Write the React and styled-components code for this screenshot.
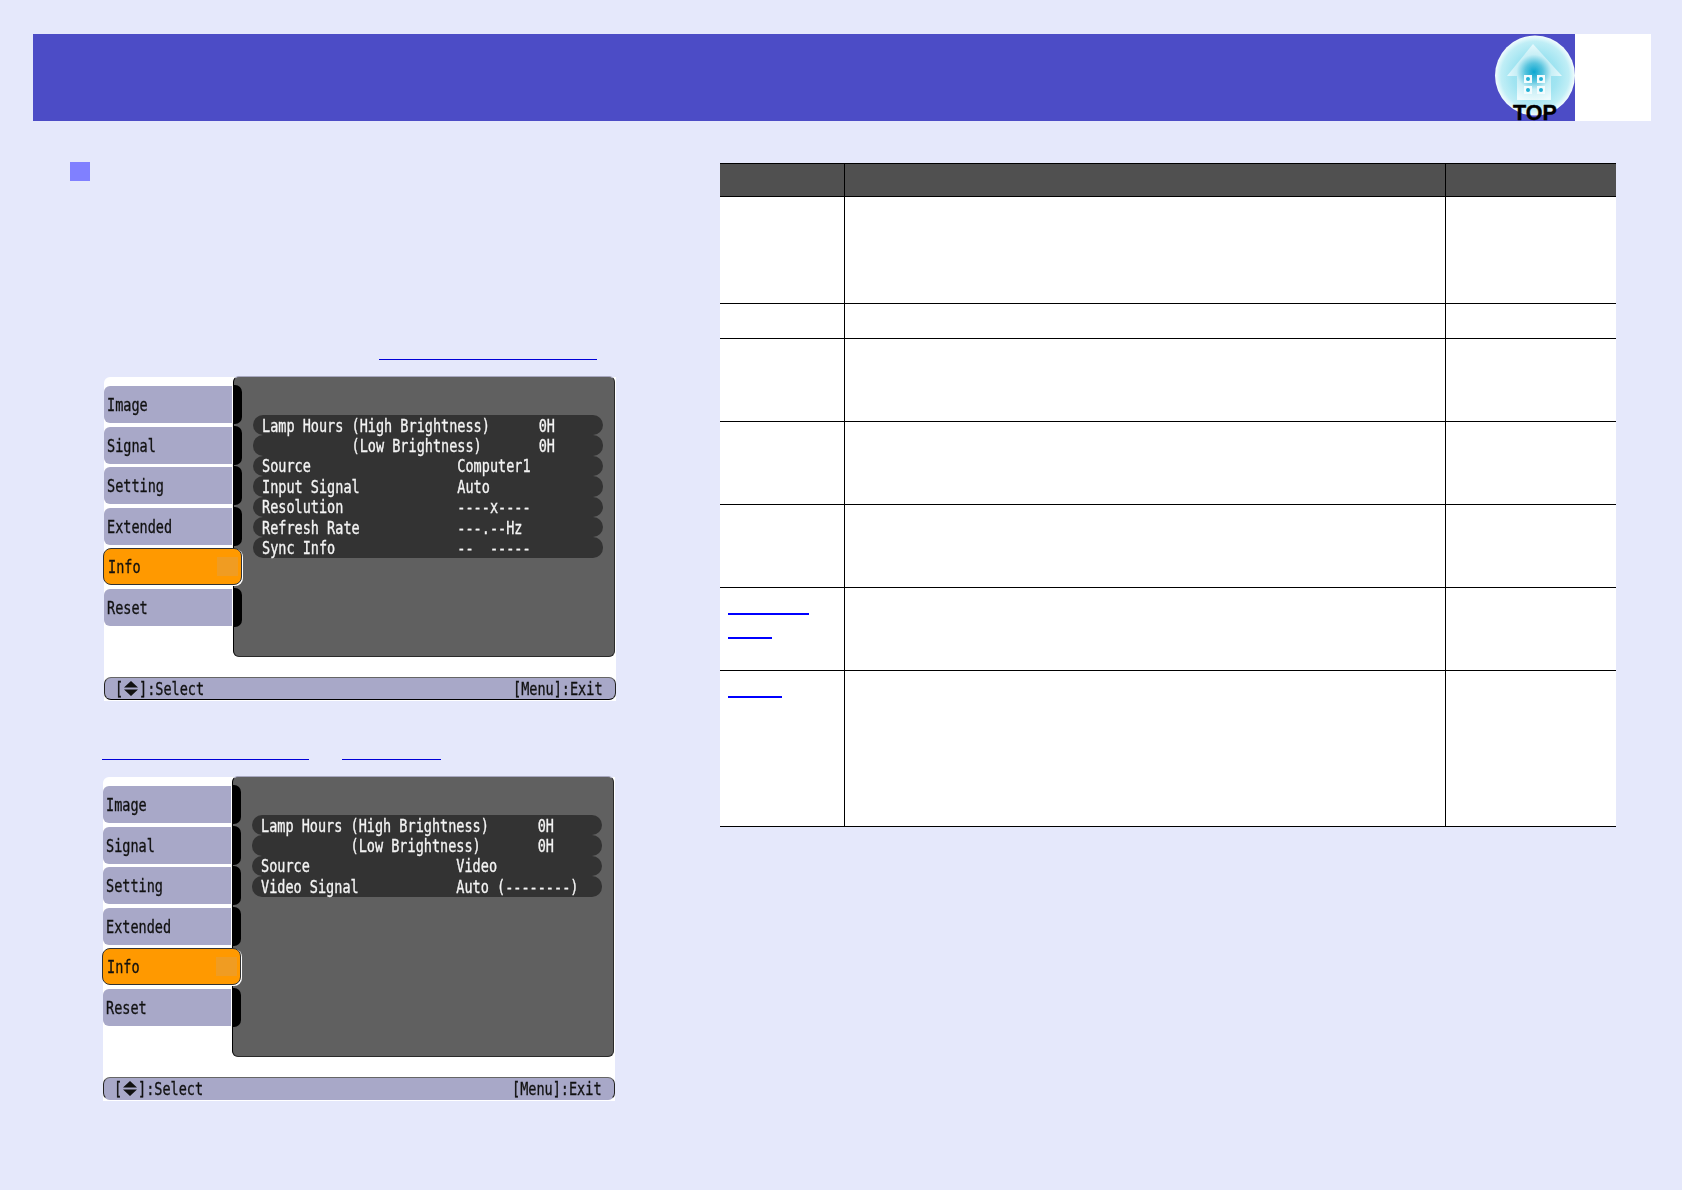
import React from "react";
import styled, { createGlobalStyle } from "styled-components";

const Global = createGlobalStyle`
  html, body { margin: 0; padding: 0; background: #e5e8fb; }
  #root { width: 1682px; height: 1190px; overflow: hidden; font-family: "Liberation Sans", sans-serif; }
`;

const Page = styled.div`
  display: flex;
  flex-direction: column;
  padding-top: 34px;
`;

const Header = styled.header`
  display: flex;
  width: 1618px;
  height: 87px;
  margin-left: 33px;
`;

const HeaderBar = styled.div`
  flex: 1;
  display: flex;
  justify-content: flex-end;
  background: #4c4cc6;
`;

const HeaderPageBox = styled.div`
  width: 76px;
  background: #fff;
`;

const Body = styled.main`
  display: grid;
  grid-template-columns: 650px 896px;
  padding: 41px 0 0 70px;
`;

const LeftColumn = styled.section`
  display: flex;
  flex-direction: column;
`;

const Bullet = styled.div`
  width: 20px;
  height: 19px;
  background: #8080ff;
`;

const LinkRow = styled.div`
  display: flex;
  align-items: flex-end;
  height: ${(p) => p.$height}px;
  padding-left: ${(p) => p.$indent}px;
  gap: 33px;
`;

const RefLink = styled.a`
  display: block;
  width: ${(p) => p.$width}px;
  border-bottom: 1px solid #0000d8;
`;

/* ---------- projector menu ---------- */

const Osd = styled.div`
  display: flex;
  flex-direction: column;
  width: 512px;
  height: 324px;
  margin: ${(p) => p.$top}px 0 0 ${(p) => p.$left}px;
  background: #fff;
  border-radius: 6px 0 0 0;
`;

const OsdMain = styled.div`
  display: flex;
  height: 280px;
`;

const TabList = styled.div`
  display: flex;
  flex-direction: column;
  gap: 3.6px;
  width: 129px;
  padding-top: 9px;
  position: relative;
  z-index: 1;
`;

const Tab = styled.div`
  position: relative;
  display: flex;
  align-items: center;
  box-sizing: border-box;
  height: 37px;
  padding-top: 1px;
  color: #111;
  ${(p) =>
    p.$active
      ? `
    width: 139px;
    margin-left: -1px;
    padding-left: 4px;
    background: #ff9900;
    border: 1px solid #333;
    border-radius: 8px;
    box-shadow: 1px 1px 0 #fff;
  `
      : `
    width: 128px;
    padding-left: 3px;
    background: #a8a8c8;
    border-radius: 6px 0 0 6px;
    &::after {
      content: "";
      position: absolute;
      left: 129px;
      top: -1px;
      bottom: -1px;
      width: 9px;
      background: #000;
      border-radius: 0 7px 7px 0;
    }
  `}
`;

const TabMarker = styled.span`
  position: absolute;
  right: 3px;
  top: 8px;
  width: 21px;
  height: 19px;
  background: #f09c22;
`;

const Panel = styled.div`
  box-sizing: border-box;
  width: 382px;
  height: 281px;
  margin-top: -1px;
  padding: 38px 11px 0 19px;
  background: #606060;
  border: 1px solid #2a2a2a;
  border-top-color: #a8a8c0;
  border-left-color: #000;
  border-radius: 6px;
`;

const InfoRow = styled.div`
  display: flex;
  align-items: center;
  height: 20.4px;
  padding: 1px 0 0 9px;
  box-sizing: border-box;
  background: #333;
  border-radius: 10px;
  color: #f4f4f4;
`;

const OsdText = styled.span`
  display: inline-block;
  width: ${(p) => p.$chars * 8.14}px;
  font-family: "DejaVu Sans Mono", monospace;
  font-size: 18px;
  line-height: 18px;
  white-space: pre;
  -webkit-text-stroke: 0.35px currentColor;
  transform: scaleX(0.751);
  transform-origin: left center;
`;

const StatusBar = styled.div`
  display: flex;
  align-items: center;
  justify-content: space-between;
  box-sizing: border-box;
  height: 23px;
  margin-top: 20px;
  padding: 0 12px 0 10px;
  background: #a8a8c8;
  color: #111;
  border-radius: 7px;
  border: 1px solid #222;
  border-top-color: #666;
  border-bottom-color: ${(p) => (p.$edge ? "#000" : "#a8a8c8")};
`;

const StatusGroup = styled.div`
  display: flex;
  align-items: center;
`;

const ArrowsIcon = styled.svg`
  width: 16px;
  height: 17px;
  display: block;
`;

/* ---------- table ---------- */

const Table = styled.table`
  width: 896px;
  height: 664px;
  margin-top: 1px;
  table-layout: fixed;
  border-collapse: separate;
  border-spacing: 0;
  align-self: start;
  background: #fff;
`;

const HeadCell = styled.th`
  box-sizing: border-box;
  height: 34px;
  padding: 0;
  background: #505050;
  border-top: 1px solid #000;
  border-bottom: 1px solid #000;
  border-right: ${(p) => (p.$last ? "none" : "1px solid #000")};
  width: ${(p) => p.$width}px;
`;

const Row = styled.tr`
  height: ${(p) => p.$height}px;
`;

const Cell = styled.td`
  padding: 0 0 0 8px;
  vertical-align: top;
  box-sizing: border-box;
  border-bottom: 1px solid #000;
  border-right: ${(p) => (p.$last ? "none" : "1px solid #000")};
`;

const CellLink = styled.a`
  display: block;
  box-sizing: border-box;
  width: ${(p) => p.$width}px;
  height: ${(p) => p.$height}px;
  border-bottom: 2px solid #0000ff;
`;

function Label({ text }) {
  return <OsdText $chars={text.length}>{text}</OsdText>;
}

function TopLogo() {
  return (
    <svg width="80" height="87" viewBox="0 0 80 87" style={{ display: "block", overflow: "visible" }}>
      <defs>
        <radialGradient id="disc" cx="50%" cy="50%" r="50%">
          <stop offset="0%" stopColor="#8fdcec" />
          <stop offset="55%" stopColor="#a0e4f1" />
          <stop offset="85%" stopColor="#c0eef6" />
          <stop offset="100%" stopColor="#f4fdfe" />
        </radialGradient>
        <radialGradient id="house" gradientUnits="userSpaceOnUse" cx="39" cy="38" r="30">
          <stop offset="0%" stopColor="#0aa6d0" />
          <stop offset="30%" stopColor="#58c4de" />
          <stop offset="58%" stopColor="#c8eff6" />
          <stop offset="100%" stopColor="#eefbfd" />
        </radialGradient>
        <filter id="soft" x="-10%" y="-10%" width="120%" height="120%">
          <feGaussianBlur stdDeviation="0.6" />
        </filter>
      </defs>
      <circle cx="40" cy="41.5" r="40" fill="url(#disc)" />
      <path d="M38 10 L67 42 L56 42 L56 66 L22 66 L22 42 L12 42 Z" fill="url(#house)" filter="url(#soft)" />
      <g filter="url(#soft)">
        <rect x="29" y="41" width="8" height="8" fill="#f2fbfd" />
        <rect x="42" y="41" width="8" height="8" fill="#f2fbfd" />
        <rect x="29" y="52" width="8" height="8" fill="#f2fbfd" />
        <rect x="42" y="52" width="8" height="8" fill="#f2fbfd" />
        <circle cx="33" cy="45" r="2" fill="#22b0d4" />
        <circle cx="46" cy="45" r="2" fill="#22b0d4" />
        <circle cx="33" cy="56" r="2" fill="#22b0d4" />
        <circle cx="46" cy="56" r="2" fill="#22b0d4" />
      </g>
      <text
        x="18"
        y="86"
        fontFamily="Liberation Sans, sans-serif"
        fontWeight="700"
        fontSize="21.5"
        fill="#000"
        stroke="#000"
        strokeWidth="0.4"
      >
        TOP
      </text>
    </svg>
  );
}

const TABS = ["Image", "Signal", "Setting", "Extended", "Info", "Reset"];

const COMPUTER_ROWS = [
  "Lamp Hours (High Brightness)      0H",
  "           (Low Brightness)       0H",
  "Source                  Computer1",
  "Input Signal            Auto",
  "Resolution              ----x----",
  "Refresh Rate            ---.--Hz",
  "Sync Info               --  -----",
];

const VIDEO_ROWS = [
  "Lamp Hours (High Brightness)      0H",
  "           (Low Brightness)       0H",
  "Source                  Video",
  "Video Signal            Auto (--------)",
];

function OsdMenu({ rows, top, left, edge }) {
  return (
    <Osd $top={top} $left={left}>
      <OsdMain>
        <TabList>
          {TABS.map((name) => (
            <Tab key={name} $active={name === "Info"}>
              <Label text={name} />
              {name === "Info" && <TabMarker />}
            </Tab>
          ))}
        </TabList>
        <Panel>
          {rows.map((text) => (
            <InfoRow key={text}>
              <Label text={text} />
            </InfoRow>
          ))}
        </Panel>
      </OsdMain>
      <StatusBar $edge={edge}>
        <StatusGroup>
          <Label text="[" />
          <ArrowsIcon viewBox="0 0 16 17">
            <path d="M8 1 L15 7.5 H1 Z M1 9.5 H15 L8 16 Z" fill="#111" />
          </ArrowsIcon>
          <Label text="]:Select" />
        </StatusGroup>
        <Label text="[Menu]:Exit" />
      </StatusBar>
    </Osd>
  );
}

const ROW_HEIGHTS = [107, 35, 83, 83, 83, 83, 156];

export default function App() {
  return (
    <Page>
      <Global />
      <Header>
        <HeaderBar>
          <TopLogo />
        </HeaderBar>
        <HeaderPageBox />
      </Header>
      <Body>
        <LeftColumn>
          <Bullet />
          <LinkRow $height={179} $indent={309}>
            <RefLink $width={218} href="#" />
          </LinkRow>
          <OsdMenu rows={COMPUTER_ROWS} top={17} left={34} edge />
          <LinkRow $height={59} $indent={32}>
            <RefLink $width={207} href="#" />
            <RefLink $width={99} href="#" />
          </LinkRow>
          <OsdMenu rows={VIDEO_ROWS} top={17} left={33} />
        </LeftColumn>
        <Table>
          <thead>
            <tr>
              <HeadCell $width={125} />
              <HeadCell $width={601} />
              <HeadCell $width={170} $last />
            </tr>
          </thead>
          <tbody>
            {ROW_HEIGHTS.map((height, i) => (
              <Row key={i} $height={height}>
                <Cell>
                  {i === 5 && (
                    <>
                      <CellLink $width={81} $height={27} href="#" />
                      <CellLink $width={44} $height={24} href="#" />
                    </>
                  )}
                  {i === 6 && <CellLink $width={54} $height={27} href="#" />}
                </Cell>
                <Cell />
                <Cell $last />
              </Row>
            ))}
          </tbody>
        </Table>
      </Body>
    </Page>
  );
}
